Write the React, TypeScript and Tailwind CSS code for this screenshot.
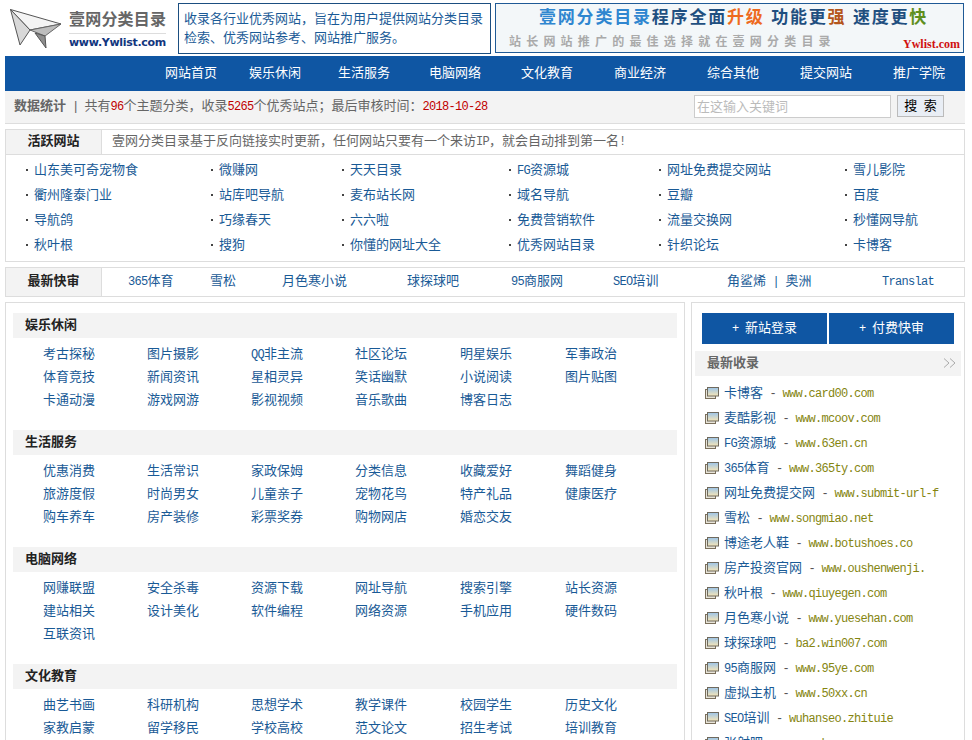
const navItems = ["网站首页", "娱乐休闲", "生活服务", "电脑网络", "文化教育", "商业经济", "综合其他", "提交网站", "推广学院"];

const activeSites = [
  "山东美可奇宠物食", "微赚网", "天天目录", "FG资源城", "网址免费提交网站", "雪儿影院",
  "衢州隆泰门业", "站库吧导航", "麦布站长网", "域名导航", "豆瓣", "百度",
  "导航鸽", "巧缘春天", "六六啦", "免费营销软件", "流量交换网", "秒懂网导航",
  "秋叶根", "搜狗", "你懂的网址大全", "优秀网站目录", "针织论坛", "卡博客",
];

const fastSites = ["365体育", "雪松", "月色寒小说", "球探球吧", "95商服网", "SEO培训", "角鲨烯 | 奥洲", "Translat"];

const categories = [
  {
    title: "娱乐休闲",
    items: ["考古探秘", "图片摄影", "QQ非主流", "社区论坛", "明星娱乐", "军事政治", "体育竞技", "新闻资讯", "星相灵异", "笑话幽默", "小说阅读", "图片贴图", "卡通动漫", "游戏网游", "影视视频", "音乐歌曲", "博客日志"],
  },
  {
    title: "生活服务",
    items: ["优惠消费", "生活常识", "家政保姆", "分类信息", "收藏爱好", "舞蹈健身", "旅游度假", "时尚男女", "儿童亲子", "宠物花鸟", "特产礼品", "健康医疗", "购车养车", "房产装修", "彩票奖券", "购物网店", "婚恋交友"],
  },
  {
    title: "电脑网络",
    items: ["网赚联盟", "安全杀毒", "资源下载", "网址导航", "搜索引擎", "站长资源", "建站相关", "设计美化", "软件编程", "网络资源", "手机应用", "硬件数码", "互联资讯"],
  },
  {
    title: "文化教育",
    items: ["曲艺书画", "科研机构", "思想学术", "教学课件", "校园学生", "历史文化", "家教启蒙", "留学移民", "学校高校", "范文论文", "招生考试", "培训教育"],
  },
];

const latest = [
  ["卡博客", "www.card00.com"],
  ["麦酷影视", "www.mcoov.com"],
  ["FG资源城", "www.63en.cn"],
  ["365体育", "www.365ty.com"],
  ["网址免费提交网", "www.submit-url-f"],
  ["雪松", "www.songmiao.net"],
  ["博途老人鞋", "www.botushoes.co"],
  ["房产投资官网", "www.oushenwenji."],
  ["秋叶根", "www.qiuyegen.com"],
  ["月色寒小说", "www.yuesehan.com"],
  ["球探球吧", "ba2.win007.com"],
  ["95商服网", "www.95ye.com"],
  ["虚拟主机", "www.50xx.cn"],
  ["SEO培训", "wuhanseo.zhituie"],
  ["张射吧", "www.zsbar.com"],
];

// latin runs are half width in the original font
const Mixed = ({ text }: { text: string }) => (
  <>
    {text.split(/([\x00-\x7f]+)/).map((part, i) =>
      i % 2 === 1 ? (
        <span key={i} className="whitespace-pre font-['Liberation_Mono'] text-[12px] tracking-[-0.7px]">
          {part}
        </span>
      ) : (
        part
      )
    )}
  </>
);

const PlaneLogo = () => (
  <svg width="52" height="40" viewBox="0 0 52 40" className="shrink-0">
    <polygon points="0.5,0.5 51,15 20,21" fill="#f4f4f4" stroke="#555" strokeWidth="1" />
    <polygon points="0.5,0.5 20,21 10,36" fill="#d8d8d8" stroke="#555" strokeWidth="1" />
    <polygon points="20,21 51,15 35,27" fill="#bdbdbd" stroke="#666" strokeWidth="1" />
    <polygon points="25,24 35,27 36,39" fill="#8e8e8e" stroke="#555" strokeWidth="1" />
  </svg>
);

const FolderIcon = () => (
  <svg width="14" height="12" viewBox="0 0 14 12" className="shrink-0">
    <defs>
      <linearGradient id="win" x1="0" y1="0" x2="0" y2="1">
        <stop offset="0" stopColor="#9cc4e8" />
        <stop offset="1" stopColor="#f6e6b8" />
      </linearGradient>
    </defs>
    <rect x="0.5" y="2.5" width="10" height="9" fill="#e8e4d8" stroke="#7b705c" />
    <rect x="2.5" y="0.5" width="11" height="8.5" fill="url(#win)" stroke="#6f6a5e" />
  </svg>
);

export default function App() {
  return (
    <div className="h-[740px] overflow-hidden bg-white font-['Liberation_Sans','Noto_Sans_CJK_SC',sans-serif] text-[13px] text-[#666]">
      <div className="ml-[5px] w-[960px]">
        {/* top */}
        <div className="flex h-[56px] items-start pt-[3px]">
          <div className="flex h-[51px] w-[173px] items-center pl-[5px]">
            <PlaneLogo />
            <div className="ml-[7px] flex flex-col pt-[3px]">
              <span className="border-b border-[#ddd] pb-[2px] text-[16px] font-bold leading-[22px] tracking-[0.2px] text-[#666]">壹网分类目录</span>
              <span className="font-['DejaVu_Sans'] text-[11px] font-bold leading-[18px] tracking-[-0.3px] text-[#12367e]">www.Ywlist.com</span>
            </div>
          </div>
          <div className="flex h-[51px] w-[313px] flex-col justify-center border border-[#1b4e80] pb-[1px] pl-[5px] text-[13px] leading-[19px] text-[#1a5a96]">
            <p>收录各行业优秀网站，旨在为用户提供网站分类目录</p>
            <p>检索、优秀网站参考、网站推广服务。</p>
          </div>
          <div className="relative ml-[4px] h-[50px] w-[469px] border border-[#1f5a96] bg-[#f3f7f9]">
            <p className="mt-[1px] whitespace-nowrap pl-[43px] text-[17px] font-bold leading-[26px] tracking-[1.8px] text-[#1f4f80]">
              <span className="text-[#2f86d0]">壹网分类目录</span>程序全面<span className="text-[#ee6a1e]">升级</span> 功能更<span className="text-[#b5561c]">强</span> 速度更<span className="text-[#5f8f1e]">快</span>
            </p>
            <p className="mt-[3px] whitespace-nowrap pl-[13px] text-[12px] font-bold leading-[16px] tracking-[5.2px] text-[#aaa]">站长网站推广的最佳选择就在壹网分类目录</p>
            <span className="absolute bottom-[1px] right-[3px] font-['Liberation_Serif'] text-[12px] font-bold leading-[14px] text-[#d01010]">Ywlist.com</span>
          </div>
        </div>

        {/* nav */}
        <div className="grid h-[35px] grid-cols-[84px_89px_91px_92px_93px_93px_93px_93px_52px] items-center bg-[#0f56a3] pb-[2px] pl-[160px] text-[13px] text-white">
          {navItems.map((item) => (
            <a key={item}>{item}</a>
          ))}
        </div>

        {/* stats */}
        <div className="flex h-[33px] items-center border-b border-[#ddd] bg-[#f3f3f3] pb-[2px] pl-[9px]">
          <b className="font-bold text-[#666]">数据统计</b>
          <span className="ml-[8px] mr-[7px]">|</span>
          <span>
            共有<span className="text-[#c00000]"><Mixed text="96" /></span>个主题分类，收录<span className="text-[#c00000]"><Mixed text="5265" /></span>个优秀站点；最后审核时间：<span className="text-[#c00000]"><Mixed text="2018-10-28" /></span>
          </span>
          <div className="ml-auto flex items-center pr-[21px]">
            <input
              placeholder="在这输入关键词"
              className="h-[23px] w-[197px] border border-[#ccc] bg-white pl-[2px] text-[13px] outline-none placeholder:text-[#bbb]"
            />
            <button className="ml-[6px] h-[22px] w-[47px] border border-[#bbb] bg-[#e9eef5] text-[13px] text-black">
              <Mixed text="搜 索" />
            </button>
          </div>
        </div>

        {/* active sites */}
        <div className="mt-[5px] border border-[#ddd]">
          <div className="flex h-[25px] items-stretch border-b border-[#ddd]">
            <div className="flex w-[96px] items-center justify-center border-r border-[#ddd] bg-[#f3f3f3] pb-[2px] font-bold text-[#222]">活跃网站</div>
            <p className="flex items-center pb-[2px] pl-[10px] text-[#666]">
              <span>
                壹网分类目录基于反向链接实时更新，任何网站只要有一个来访<Mixed text="IP" />，就会自动排到第一名<Mixed text="!" />
              </span>
            </p>
          </div>
          <div className="grid grid-cols-[185px_131px_167px_150px_186px_1fr] pb-[4px] pl-[20px] pt-[2px]">
            {activeSites.map((site) => (
              <a key={site} className="flex h-[25px] items-center text-[#195a96]">
                <span className="mr-[6px] h-[2px] w-[2px] bg-[#444]" />
                <span>
                  <Mixed text={site} />
                </span>
              </a>
            ))}
          </div>
        </div>

        {/* fast review */}
        <div className="mt-[5px] flex h-[30px] items-stretch border border-[#ddd]">
          <div className="flex w-[96px] items-center justify-center border-r border-[#ddd] bg-[#f3f3f3] pb-[2px] font-bold text-[#222]">最新快审</div>
          <div className="grid grid-cols-[82px_72px_125px_104px_102px_114px_155px_1fr] items-center pb-[2px] pl-[26px]">
            {fastSites.map((site) => (
              <a key={site} className="whitespace-pre text-[#195a96]">
                <Mixed text={site} />
              </a>
            ))}
          </div>
        </div>

        <div className="mt-[5px] flex items-start gap-[6px]">
          {/* categories */}
          <div className="w-[680px] border border-[#ddd] px-[7px] pt-[10px]">
            {categories.map((cat) => (
              <div key={cat.title} className="mb-[18px]">
                <div className="flex h-[25px] items-center bg-[#f3f3f3] pb-[2px] pl-[12px] font-bold text-[#222]">{cat.title}</div>
                <div className="grid grid-cols-[104px_104px_104px_105px_105px_1fr] pl-[30px] pt-[5px]">
                  {cat.items.map((item) => (
                    <a key={item} className="h-[23px] leading-[21px] text-[#195a96]">
                      <Mixed text={item} />
                    </a>
                  ))}
                </div>
              </div>
            ))}
          </div>

          {/* sidebar */}
          <div className="w-[274px] border border-[#ddd] pt-[10px]">
            <div className="flex gap-[2px] pl-[10px]">
              <a className="flex h-[31px] w-[125px] items-center justify-center bg-[#0f56a3] pb-[2px] text-white">
                <span>
                  <Mixed text="+ " />新站登录
                </span>
              </a>
              <a className="flex h-[31px] w-[125px] items-center justify-center bg-[#0f56a3] pb-[2px] text-white">
                <span>
                  <Mixed text="+ " />付费快审
                </span>
              </a>
            </div>
            <div className="mx-[3px] mt-[7px] flex h-[25px] items-center justify-between bg-[#f3f3f3] pb-[2px] pl-[12px] pr-[5px]">
              <b className="font-bold text-[#666]">最新收录</b>
              <svg width="13" height="10" viewBox="0 0 13 10" fill="none" stroke="#aaa" strokeWidth="1">
                <polyline points="1,0.5 6,5 1,9.5" />
                <polyline points="7,0.5 12,5 7,9.5" />
              </svg>
            </div>
            <ul className="pl-[13px] pt-[5px]">
              {latest.map(([name, url]) => (
                <li key={name} className="flex h-[25px] items-center whitespace-pre pb-[2px]">
                  <FolderIcon />
                  <span className="ml-[5px] text-[#195a96]">
                    <Mixed text={name} />
                  </span>
                  <span className="text-[#555]">
                    <Mixed text=" - " />
                  </span>
                  <span className="text-[#858510]">
                    <Mixed text={url} />
                  </span>
                </li>
              ))}
            </ul>
          </div>
        </div>
      </div>
    </div>
  );
}
